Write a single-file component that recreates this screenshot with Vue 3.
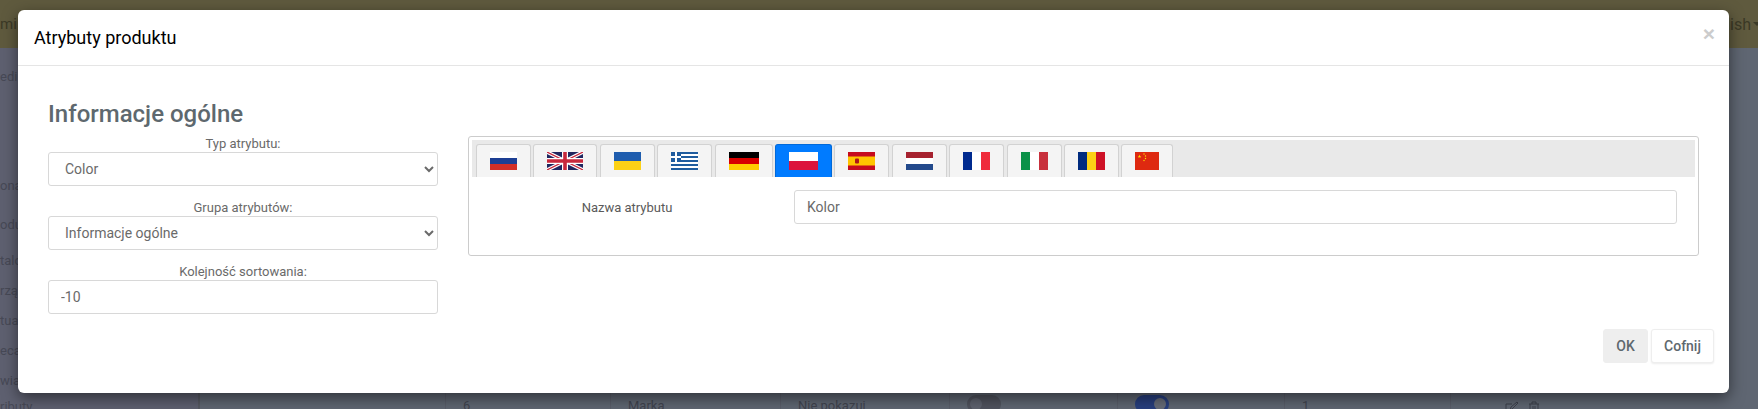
<script setup>
const nav = [
  { text: 'edi', cls: 'g0' },
  { text: 'ona', cls: 'g91' },
  { text: 'odu', cls: 'g21' },
  { text: 'talo', cls: 'g18' },
  { text: 'rzą', cls: 'g12' },
  { text: 'tual', cls: 'g12' },
  { text: 'eca', cls: 'g12' },
  { text: 'wia', cls: 'g12' },
  { text: 'ributy', cls: 'g8' }
]
</script>

<template>
  <div class="page">
    <header class="topbar">
      <span class="tb-left">mi</span>
      <span class="tb-right">lish <i class="caret"></i></span>
    </header>
    <div class="under">
      <nav class="side">
        <span v-for="n in nav" :key="n.text" class="nav-item" :class="n.cls">{{ n.text }}</span>
      </nav>
      <main class="main">
        <div class="row">
          <span class="c1">6</span>
          <span class="c2">Marka</span>
          <span class="c3">Nie pokazuj</span>
          <span class="c4"><i class="tog off"></i></span>
          <span class="c5"><i class="tog on"></i></span>
          <span class="c6">1</span>
          <span class="c7">
            <svg width="14" height="14" viewBox="0 0 14 14" fill="none" stroke="#3d404b" stroke-width="1"><path d="M11 8v5H1V3h6M5 9l1-3 6-5 1 1-6 6z"/></svg>
            <svg width="12" height="14" viewBox="0 0 12 14" fill="none" stroke="#3d404b" stroke-width="1"><path d="M1 3h10M4 3V1h4v2M2 3v10h8V3M5 5v6M7 5v6"/></svg>
          </span>
        </div>
      </main>
    </div>

    <section class="modal">
      <div class="m-head">
        <h5 class="m-title">Atrybuty produktu</h5>
        <span class="m-close">×</span>
      </div>
      <div class="m-body">
        <h3 class="heading">Informacje ogólne</h3>
        <div class="cols">
          <div class="left">
            <div class="group">
              <label class="lab">Typ atrybutu:</label>
              <select class="ctl"><option>Color</option></select>
            </div>
            <div class="group">
              <label class="lab">Grupa atrybutów:</label>
              <select class="ctl"><option>Informacje ogólne</option></select>
            </div>
            <div class="group">
              <label class="lab">Kolejność sortowania:</label>
              <input class="ctl txt" value="-10" />
            </div>
          </div>
          <div class="panel">
            <div class="strip">
              <a class="tab">
                <svg width="27" height="18" viewBox="0 0 27 18"><rect width="27" height="6" fill="#fff"/><rect y="6" width="27" height="6" fill="#1d3f94"/><rect y="12" width="27" height="6" fill="#d22f27"/></svg>
              </a>
              <a class="tab">
                <svg width="36" height="18" viewBox="0 0 60 30"><rect width="60" height="30" fill="#20265f"/><path d="M0 0L60 30M60 0L0 30" stroke="#fff" stroke-width="6"/><path d="M0 0L60 30M60 0L0 30" stroke="#c8283c" stroke-width="2"/><path d="M30 0V30M0 15H60" stroke="#fff" stroke-width="10"/><path d="M30 0V30M0 15H60" stroke="#c8283c" stroke-width="6"/></svg>
              </a>
              <a class="tab">
                <svg width="27" height="18" viewBox="0 0 27 18"><rect width="27" height="9" fill="#1f5dae"/><rect y="9" width="27" height="9" fill="#fcd116"/></svg>
              </a>
              <a class="tab">
                <svg width="27" height="18" viewBox="0 0 27 18"><rect width="27" height="18" fill="#fff"/><path d="M0 1h27M0 5h27M0 9h27M0 13h27M0 17h27" stroke="#1f5c9e" stroke-width="2"/><rect width="10" height="10" fill="#1f5c9e"/><path d="M5 0v10M0 5h10" stroke="#fff" stroke-width="2"/></svg>
              </a>
              <a class="tab">
                <svg width="30" height="18" viewBox="0 0 30 18"><rect width="30" height="6" fill="#000"/><rect y="6" width="30" height="6" fill="#d80000"/><rect y="12" width="30" height="6" fill="#ffce00"/></svg>
              </a>
              <a class="tab active">
                <svg width="29" height="18" viewBox="0 0 29 18"><rect width="29" height="9" fill="#fff"/><rect y="9" width="29" height="9" fill="#dc143c"/></svg>
              </a>
              <a class="tab">
                <svg width="27" height="18" viewBox="0 0 27 18"><rect width="27" height="18" fill="#c60b1e"/><rect y="4.5" width="27" height="9" fill="#ffc400"/><rect x="7" y="6.5" width="4" height="5" rx="1" fill="#ad1519"/></svg>
              </a>
              <a class="tab">
                <svg width="27" height="18" viewBox="0 0 27 18"><rect width="27" height="6" fill="#a6222f"/><rect y="6" width="27" height="6" fill="#fff"/><rect y="12" width="27" height="6" fill="#234a8c"/></svg>
              </a>
              <a class="tab">
                <svg width="27" height="18" viewBox="0 0 27 18"><rect width="9" height="18" fill="#002a8f"/><rect x="9" width="9" height="18" fill="#fff"/><rect x="18" width="9" height="18" fill="#ef2b3b"/></svg>
              </a>
              <a class="tab">
                <svg width="27" height="18" viewBox="0 0 27 18"><rect width="9" height="18" fill="#0a9148"/><rect x="9" width="9" height="18" fill="#fff"/><rect x="18" width="9" height="18" fill="#c8303c"/></svg>
              </a>
              <a class="tab">
                <svg width="27" height="18" viewBox="0 0 27 18"><rect width="9" height="18" fill="#002b7f"/><rect x="9" width="9" height="18" fill="#fcd116"/><rect x="18" width="9" height="18" fill="#ce1126"/></svg>
              </a>
              <a class="tab">
                <svg width="24" height="18" viewBox="0 0 24 18"><rect width="24" height="18" fill="#de2910"/><path d="M4.5 2.5l1.2 3.6-3-2.2h3.6l-3 2.2z" fill="#ffde00"/><circle cx="9" cy="2" r=".7" fill="#ffde00"/><circle cx="10.5" cy="4" r=".7" fill="#ffde00"/><circle cx="10.5" cy="6.5" r=".7" fill="#ffde00"/><circle cx="9" cy="8.5" r=".7" fill="#ffde00"/></svg>
              </a>
            </div>
            <div class="pane">
              <label class="pane-lab">Nazwa atrybutu</label>
              <input class="ctl txt pane-input" value="Kolor" />
            </div>
          </div>
        </div>
      </div>
      <div class="m-foot">
        <button class="btn ok">OK</button>
        <button class="btn back">Cofnij</button>
      </div>
    </section>
  </div>
</template>

<style scoped>
.page {
  position: relative;
  width: 1758px;
  height: 409px;
  overflow: hidden;
  background: #5f6370;
  font-family: Roboto, "Liberation Sans", sans-serif;
  display: flex;
  flex-direction: column;
}
.topbar {
  height: 48px;
  flex: none;
  background: #5f5a3e;
  color: #3b3926;
  font-size: 15px;
  display: flex;
  justify-content: space-between;
  align-items: center;
}
.tb-right { display: flex; align-items: center; gap: 2px; font-size: 16px; }
.caret {
  display: block;
  border: 4px solid transparent;
  border-top-color: #3b3926;
  border-bottom: 0;
  margin-right: -3px;
}
.under { flex: 1; display: flex; min-height: 0; }
.side {
  width: 198px;
  flex: none;
  background: #5e6070;
  display: flex;
  flex-direction: column;
  padding-top: 20px;
  color: #474956;
  font-size: 13px;
}
.nav-item { height: 18px; line-height: 18px; flex: none; }
.g0 { margin-top: 0; }
.g91 { margin-top: 91px; }
.g21 { margin-top: 21px; }
.g18 { margin-top: 18px; }
.g12 { margin-top: 12px; }
.g8 { margin-top: 8px; }
.main {
  flex: 1;
  background: #5f6672;
  border-left: 2px solid #565962;
  display: flex;
  flex-direction: column;
  justify-content: flex-end;
  min-width: 0;
}
.row {
  height: 16px;
  flex: none;
  display: flex;
  color: #41444f;
  font-size: 13px;
  line-height: 18px;
  overflow: hidden;
  margin-left: 245px;
}
.row span {
  box-sizing: border-box;
  flex: none;
  padding: 4px 0 0 17px;
  border-left: 1px solid #5a5e6a;
  height: 16px;
}
.c1 { width: 165px; }
.c2 { width: 170px; }
.c3 { width: 169px; }
.c4 { width: 168px; }
.c5 { width: 167px; }
.c6 { width: 166px; }
.row .c4, .row .c5 { padding-top: 2px; }
.row .c7 { display: flex; gap: 9px; padding: 8px 0 0 54px; }
.tog {
  display: flex;
  width: 34px;
  height: 18px;
  border-radius: 9px;
  padding: 3px;
  box-sizing: border-box;
}
.tog::after {
  content: "";
  width: 12px;
  height: 12px;
  border-radius: 50%;
}
.tog.off { background: #50535e; }
.tog.off::after { background: #5e626e; }
.tog.on { background: #283f7e; justify-content: flex-end; }
.tog.on::after { background: #676c78; }

.modal {
  position: absolute;
  left: 18px;
  top: 10px;
  width: 1711px;
  height: 383px;
  background: #fff;
  border-radius: 6px;
  box-shadow: 0 5px 15px rgba(0, 0, 0, 0.5);
  display: flex;
  flex-direction: column;
}
.m-head {
  height: 55px;
  flex: none;
  border-bottom: 1px solid #e5e5e5;
  padding: 0 14px 0 16px;
  display: flex;
  align-items: center;
  justify-content: space-between;
}
.m-title {
  margin: 0;
  font-size: 18px;
  font-weight: 400;
  color: #000;
}
.m-close {
  color: #ccc;
  font-size: 21px;
  font-weight: 700;
  line-height: 1;
  font-family: "Liberation Sans", sans-serif;
  margin-top: -8px;
}
.m-body { padding: 34px 30px 0 30px; }
.heading {
  margin: 0 0 7px;
  font-size: 24px;
  line-height: 29px;
  font-weight: 500;
  color: #5e686e;
}
.cols { display: flex; gap: 30px; align-items: flex-start; }
.left {
  width: 390px;
  flex: none;
  display: flex;
  flex-direction: column;
  gap: 14px;
}
.group { display: flex; flex-direction: column; }
.lab {
  font-size: 13px;
  line-height: 16px;
  text-align: center;
  color: #6a6a6a;
}
.ctl {
  box-sizing: border-box;
  height: 34px;
  width: 100%;
  border: 1px solid #d8d8d8;
  border-radius: 3px;
  background: #fff;
  color: #6a6a6a;
  font: 14px Roboto, "Liberation Sans", sans-serif;
  padding: 0 12px;
  outline: none;
}
.panel {
  flex: 1;
  min-width: 0;
  border: 1px solid #ccc;
  border-radius: 3px;
  padding: 3px 3px 31px;
}
.strip {
  height: 37px;
  box-sizing: border-box;
  padding: 4px 0 0 4px;
  background: #e9e9e9;
  display: flex;
  gap: 2.4px;
}
.tab {
  box-sizing: border-box;
  height: 33px;
  padding: 7px 13px 0;
  border: 1px solid #d2d2d2;
  border-bottom: 0;
  border-radius: 3px 3px 0 0;
  background: #f4f4f4;
  display: block;
}
.tab svg { display: block; }
.tab.active { background: #007bff; border-color: #0069d9; }
.pane {
  display: flex;
  align-items: center;
  padding-top: 13px;
}
.pane-lab {
  width: 310px;
  flex: none;
  text-align: center;
  font-size: 13px;
  color: #5a5a5a;
}
.pane-input {
  flex: none;
  width: 883px;
  margin-left: 12px;
}
.m-foot {
  margin-top: auto;
  padding: 0 15px 30px 0;
  display: flex;
  justify-content: flex-end;
  gap: 3px;
}
.btn {
  box-sizing: border-box;
  height: 34px;
  border: 1px solid #eee;
  border-radius: 3px;
  font: 500 14px Roboto, "Liberation Sans", sans-serif;
  color: #5e686e;
  padding: 0;
}
.ok { width: 45px; background: #eee; }
.back { width: 63px; background: #fff; box-shadow: 0 1px 2px rgba(0, 0, 0, 0.08); }
</style>
